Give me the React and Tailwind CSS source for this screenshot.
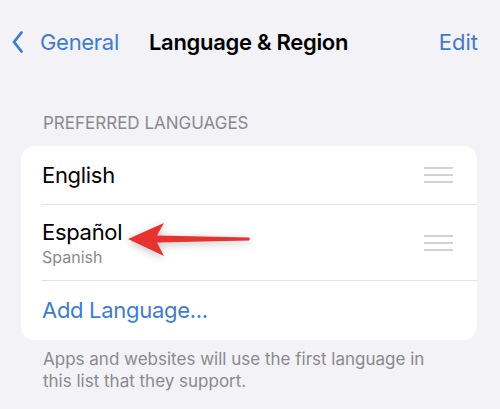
import React from "react";

function Handle() {
  return (
    <div className="flex w-[29px] flex-col gap-[5px]">
      <div className="h-[2px] bg-[#d1d1d6]" />
      <div className="h-[2px] bg-[#d1d1d6]" />
      <div className="h-[2px] bg-[#d1d1d6]" />
    </div>
  );
}

export default function App() {
  return (
    <div className="relative h-[409px] w-[500px] overflow-hidden bg-[#f2f2f7] font-['Inter',sans-serif]">
      {/* nav bar */}
      <div className="flex h-[44px] items-center pt-[40px] pl-[12px] pr-[22px]">
        <svg width="11" height="22" viewBox="0 0 11 22" className="mr-[17px]">
          <path d="M9.5 1.5 L2 11 L9.5 20.5" fill="none" stroke="#3f7ccc" strokeWidth="2.8" strokeLinecap="round" strokeLinejoin="round" />
        </svg>
        <span className="text-[22px] text-[#3f7ccc] tracking-[-0.3px]">General</span>
        <span className="ml-[30px] text-[22px] font-semibold text-black tracking-[-0.3px]">Language &amp; Region</span>
        <span className="ml-auto text-[22px] text-[#3f7ccc]">Edit</span>
      </div>

      {/* section header */}
      <div className="mt-[67px] pl-[43px] text-[17px] leading-[24px] uppercase text-[#8a8a8e]">
        Preferred Languages
      </div>

      {/* card */}
      <div className="mx-[21px] mt-[11px] w-[456px] rounded-[13px] bg-white">
        <div className="flex h-[58px] items-center pl-[21px] pr-[24px]">
          <span className="text-[22px] text-black tracking-[-0.3px]">English</span>
          <div className="ml-auto">
            <Handle />
          </div>
        </div>
        <div className="ml-[20px] h-px bg-[#e3e3e6]" />
        <div className="flex h-[75px] items-center pl-[21px] pr-[24px]">
          <div className="flex flex-col">
            <span className="text-[22px] leading-[28px] text-black tracking-[-0.3px]">Español</span>
            <span className="text-[16px] leading-[22px] text-[#8a8a8e]">Spanish</span>
          </div>
          <div className="ml-auto">
            <Handle />
          </div>
        </div>
        <div className="ml-[20px] h-px bg-[#e3e3e6]" />
        <div className="flex h-[59px] items-center pl-[21px]">
          <span className="text-[22px] text-[#3f7ccc] tracking-[-0.3px]">Add Language...</span>
        </div>
      </div>

      {/* footer */}
      <p className="mt-[8px] w-[440px] pl-[43px] text-[17px] leading-[22px] text-[#8a8a8e]">
        Apps and websites will use the first language in this list that they support.
      </p>

      {/* annotation arrow */}
      <svg
        className="absolute left-[110px] top-[210px]"
        width="150"
        height="60"
        viewBox="0 0 150 60"
        style={{ filter: "drop-shadow(0 2px 4px rgba(0,0,0,0.25))" }}
      >
        <path
          d="M18 29 L54 13 L47 25.5 L139 27.5 L140 29 L139 30.5 L47 32.5 L54 46 Z"
          fill="#e8322f"
          strokeLinejoin="round"
        />
      </svg>
    </div>
  );
}
